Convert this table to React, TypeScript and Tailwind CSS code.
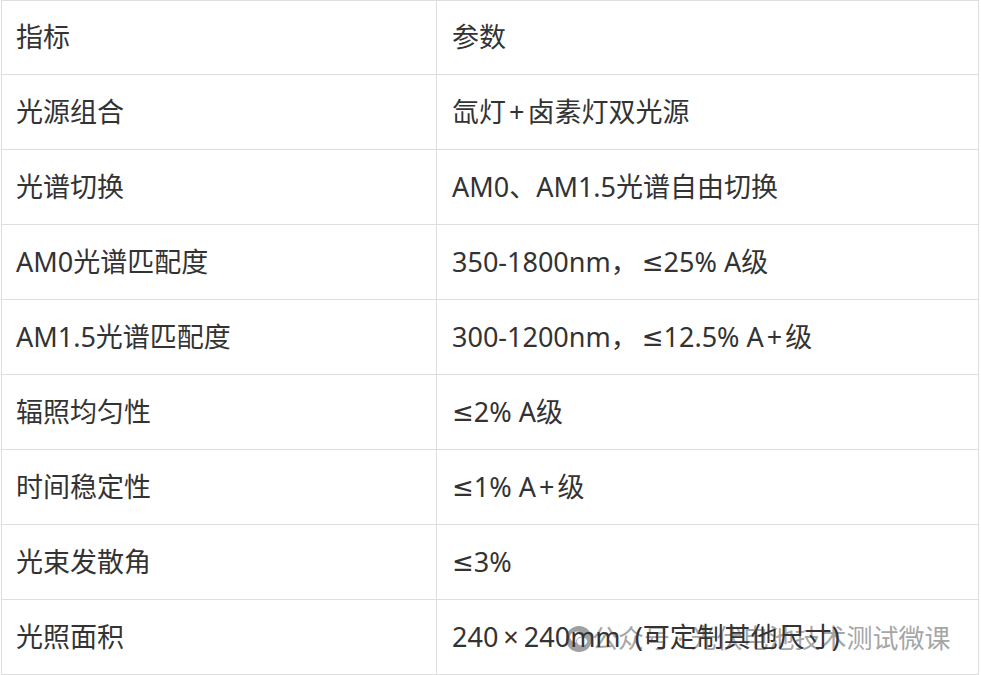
const rows = [
  ['指标', '参数'],
  ['光源组合', '氙灯+卤素灯双光源'],
  ['光谱切换', 'AM0、AM1.5光谱自由切换'],
  ['AM0光谱匹配度', '350-1800nm，≤25% A级'],
  ['AM1.5光谱匹配度', '300-1200nm，≤12.5% A+级'],
  ['辐照均匀性', '≤2% A级'],
  ['时间稳定性', '≤1% A+级'],
  ['光束发散角', '≤3%'],
  ['光照面积', '240×240mm  (可定制其他尺寸)'],
];

// the ≤, +, × glyphs come from a different font in the reference
function Cell({ text }: { text: string }) {
  const parts = text.split(/([≤+，×])/);
  return (
    <>
      {parts.map((p, i) =>
        p === '≤' ? (
          <span key={i} style={{ fontFamily: '"DejaVu Sans", sans-serif' }} className="text-[26px]">
            ≤
          </span>
        ) : p === '+' ? (
          <span key={i} className="mx-[3px]">+</span>
        ) : p === '×' ? (
          <span key={i} className="mx-[5px]">×</span>
        ) : p === '，' ? (
          <span key={i} className="mr-[4px]">，</span>
        ) : (
          <span key={i}>{p}</span>
        )
      )}
    </>
  );
}

export default function App() {
  return (
    <div
      className="relative w-[981px] h-[675px] bg-white text-[#333333] overflow-hidden"
      style={{ fontFamily: '"Noto Sans", "Noto Sans CJK SC", sans-serif' }}
    >
      {/* watermark, sits under the table text */}
      <div className="absolute left-[566px] top-[619px] z-0 flex items-center text-[26px] text-[#a6a6a6] pointer-events-none">
        <svg width="26" height="26" viewBox="0 0 26 26">
          <circle cx="13" cy="13" r="13" fill="#a0a0a0" />
          <ellipse cx="11" cy="11" rx="7" ry="5.5" fill="#fff" />
          <ellipse cx="16" cy="15.5" rx="5.5" ry="4.5" fill="#fff" stroke="#a0a0a0" strokeWidth="1" />
        </svg>
        <span>公众号 · 光伏电池技术测试微课</span>
      </div>

      <div className="relative z-10 ml-[1px] w-[978px] border-x border-[#dedede]">
        {rows.map(([k, v], i) => (
          <div
            key={k}
            className={`grid grid-cols-[434px_1fr] border-[#dedede] ${
              i === 0 ? 'h-[74px] border-t' : i === rows.length - 1 ? 'h-[76px] border-y' : 'h-[75px] border-t'
            }`}
          >
            <div className="flex items-center pl-[14px] text-[27px] whitespace-pre">{k}</div>
            <div className="flex items-center pl-[15px] text-[27px] whitespace-pre border-l border-[#dedede]">
              <Cell text={v} />
            </div>
          </div>
        ))}
      </div>
    </div>
  );
}
